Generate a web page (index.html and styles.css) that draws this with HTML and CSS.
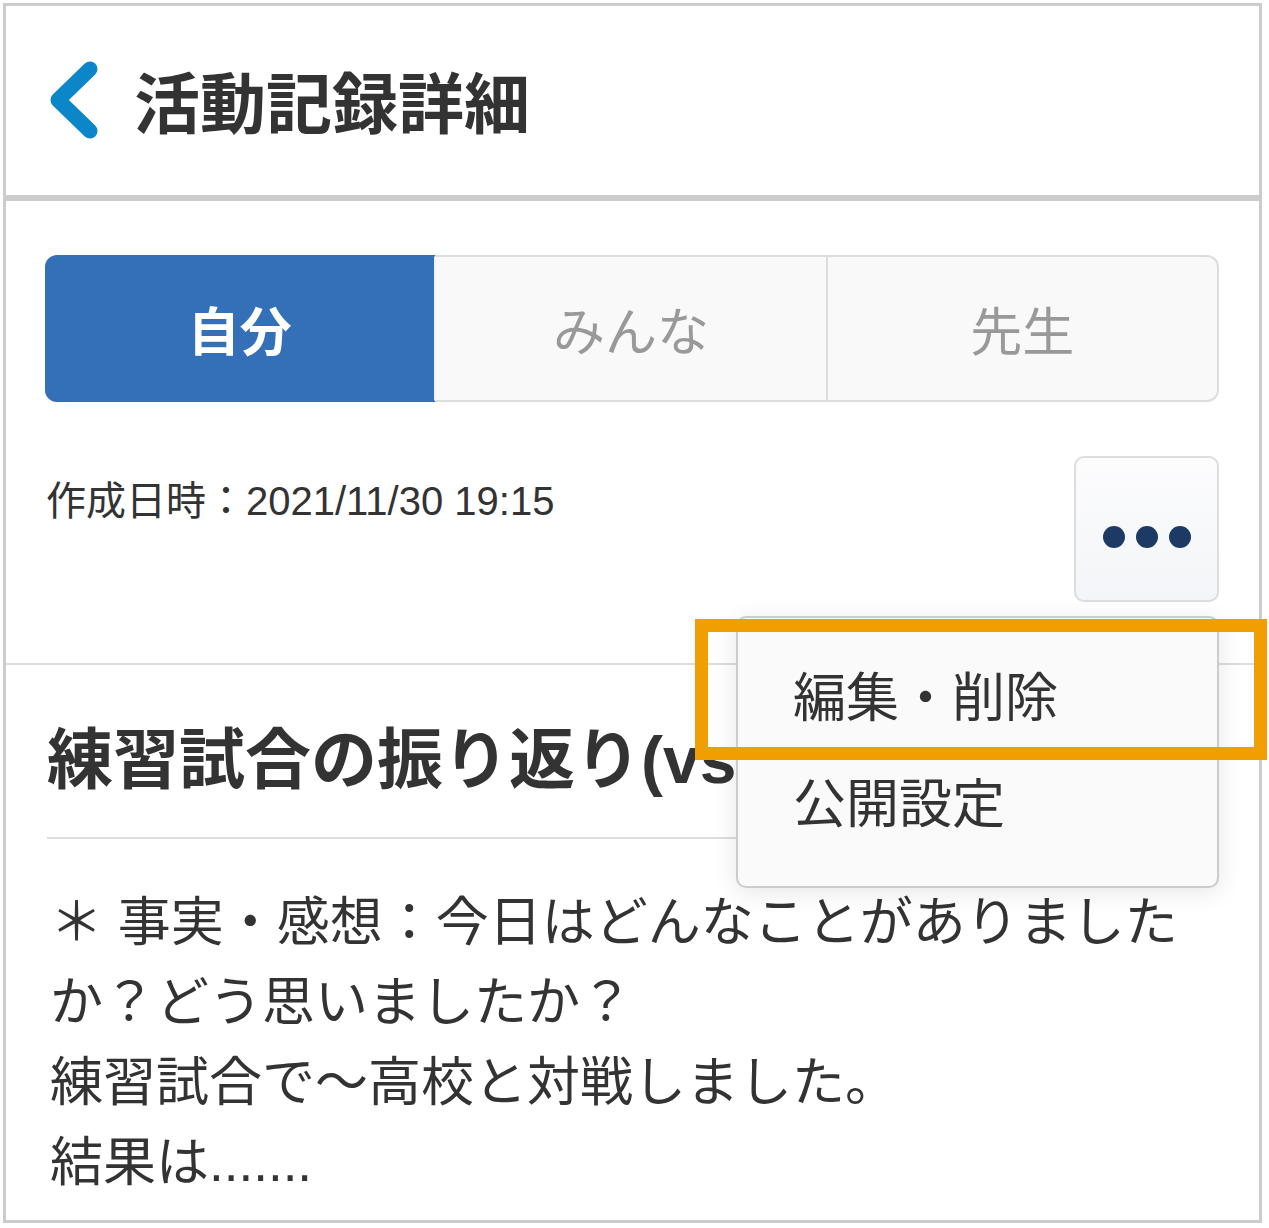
FILE: index.html
```html
<!DOCTYPE html>
<html lang="ja">

<head>
    <meta charset="UTF-8">
    <meta name="viewport" content="width=device-width, initial-scale=1.0">
    <title>活動記録詳細</title>
    <link rel="stylesheet" href="styles.css">
</head>

<body>

    <div class="tela">
        <header class="topo">
            <a class="voltar" href="#">
                <svg width="50" height="78" viewBox="0 0 50 78">
                    <polyline points="41,8 9,39 41,70" fill="none" stroke="#0b87c9" stroke-width="15" stroke-linecap="round" stroke-linejoin="round" />
                </svg>
            </a>
            <h1 class="titulo">活動記録詳細</h1>
        </header>

        <div class="detalhe">
            <div class="abas">
                <button class="aba ativa">自分</button>
                <button class="aba">みんな</button>
                <button class="aba">先生</button>
            </div>

            <div class="meta">
                <p class="criado">作成日時：2021/11/30 19:15</p>
                <div class="menu-wrap">
                    <button class="mais">
                        <span class="ponto"></span>
                        <span class="ponto"></span>
                        <span class="ponto"></span>
                    </button>
                    <ul class="menu">
                        <li class="menu-item">編集・削除</li>
                        <li class="menu-item">公開設定</li>
                        <li class="destaque"></li>
                    </ul>
                </div>
            </div>
        </div>

        <div class="registro">
            <h2 class="registro-titulo">練習試合の振り返り(vs〜高校)</h2>
            <p class="registro-texto">＊ 事実・感想：今日はどんなことがありましたか？どう思いましたか？<br>練習試合で〜高校と対戦しました。<br>結果は.......</p>
        </div>
    </div>

</body>

</html>
```

FILE: styles.css
```css
body {
    font-family: "Liberation Sans", "Noto Sans CJK JP", sans-serif;
    margin: 0;
    padding: 0;
    background-color: #fff;
    color: #333;
}

.tela {
    box-sizing: border-box;
    width: 1259px;
    height: 1220px;
    margin: 3px;
    border: 3px solid #ccc;
    background-color: #fff;
}

.topo {
    height: 189px;
    border-bottom: 6px solid #ccc;
    display: flex;
    align-items: center;
    padding-left: 43px;
}

.voltar {
    display: flex;
    margin-top: -2px;
}

.titulo {
    margin: 10px 0 0 35px;
    font-size: 66px;
    font-weight: bold;
    line-height: 1.2;
    color: #333;
}

.detalhe {
    padding: 54px 40px 61px 39px;
    border-bottom: 2px solid #ddd;
}

.abas {
    display: flex;
    height: 147px;
}

.aba {
    flex: 1;
    font-family: inherit;
    font-size: 52px;
    color: #999;
    background-color: #f9f9f9;
    border: 2px solid #ddd;
    border-left: none;
    padding: 0;
    cursor: pointer;
}

.aba:last-child {
    border-radius: 0 12px 12px 0;
}

.aba.ativa {
    background-color: #3370b8;
    border-color: #3370b8;
    color: #fff;
    font-weight: bold;
    border-radius: 12px 0 0 12px;
    border-right: 2px solid #eef2f7;
}

.meta {
    display: flex;
    justify-content: space-between;
    align-items: flex-start;
    margin-top: 54px;
}

.criado {
    margin: 17px 0 0 1px;
    font-size: 40px;
    line-height: 56px;
    color: #333;
}

.menu-wrap {
    position: relative;
}

.mais {
    box-sizing: border-box;
    width: 145px;
    height: 146px;
    display: flex;
    justify-content: center;
    align-items: center;
    gap: 11px;
    padding: 16px 0 0;
    background: linear-gradient(#fcfcfd, #f3f5f8);
    border: 2px solid #ddd;
    border-radius: 10px;
    cursor: pointer;
}

.ponto {
    width: 22px;
    height: 22px;
    border-radius: 50%;
    background-color: #1c3a64;
}

.menu {
    position: absolute;
    top: 160px;
    right: 0;
    box-sizing: border-box;
    width: 483px;
    margin: 0;
    padding: 28px 0;
    list-style: none;
    background-color: #fafafa;
    border: 2px solid #ccc;
    border-radius: 10px;
    box-shadow: 0 4px 24px rgba(0, 0, 0, 0.1);
    z-index: 2;
}

.menu-item {
    height: 106px;
    line-height: 106px;
    padding-left: 55px;
    font-size: 53px;
    color: #333;
}

.destaque {
    position: absolute;
    top: 1px;
    left: -43px;
    box-sizing: border-box;
    width: 572px;
    height: 141px;
    border: 13px solid #f19e00;
}

.registro {
    padding: 50px 40px 0 41px;
}

.registro-titulo {
    margin: 0;
    padding-bottom: 32px;
    border-bottom: 2px solid #ddd;
    font-size: 66px;
    line-height: 90px;
    font-weight: bold;
    color: #333;
    white-space: nowrap;
    overflow: hidden;
}

.registro-texto {
    margin: 44px 0 0 3px;
    font-size: 53px;
    line-height: 80px;
    color: #333;
}
```
